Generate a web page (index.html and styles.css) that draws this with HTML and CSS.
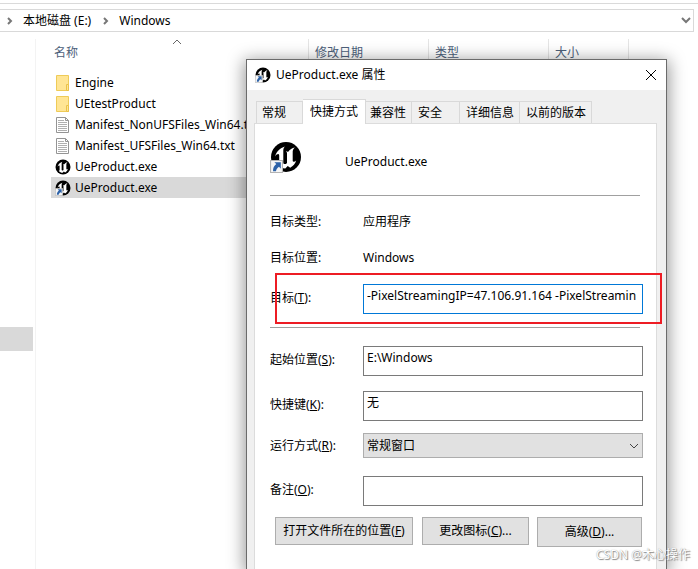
FILE: index.html
```html
<!DOCTYPE html>
<html lang="zh-CN">
  <head>
    <meta charset="UTF-8" />
    <meta name="viewport" content="width=device-width, initial-scale=1.0" />
    <title>Windows</title>
    <link rel="stylesheet" href="styles.css">
  </head>
  <body>
    <!-- shared icons -->
    <svg class="defs" aria-hidden="true">
      <symbol id="folder" viewBox="0 0 16 18">
        <path d="M1.500 1.500h12v15h-12z" fill="#ffe594" stroke="#eecb58" />
        <path d="M11.500 10.500h2v6h-2z" fill="#ffe594" stroke="#eac24a" />
      </symbol>
      <symbol id="file" viewBox="0 0 16 18">
        <path d="M1.500 1.500h9l3 3v12h-12z" fill="#fff" stroke="#949494" />
        <path d="M10.500 1.500v3h3" fill="none" stroke="#949494" />
        <path d="M3 4.500h6M3 6.500h9M3 8.500h9M3 10.500h9M3 12.500h9M3 14.500h9" stroke="#b0b0b0" />
      </symbol>
      <symbol id="unreal" viewBox="0 0 32 32">
        <circle cx="16" cy="16" r="15" fill="#000" />
        <path d="M15 5.500C10 7 6.500 10.500 5 15.500c1.500-2 2.800-2.700 3.600-2.300.6.300.6 1 .6 1.800v7c0 1.300-.7 1.600-1.700 1.400 2 2.700 4.700 4 7.800 4.100l2.400-2.400 2.500 1.700c3-1.700 5-4.300 6-7.300-1.200 1.200-2.200 1.600-3 1.100-.4-.2-.5-.6-.5-1.200V10.500c0-1.400 1-3 2.200-4-2.800.6-5 2-6.900 4.500-.6-.6-1.300-.8-2.200-.7.8.5 1.200 1.100 1.200 2v9.600c-.7.8-1.500 1.200-2.200 1.200-1 0-1.500-.6-1.500-1.600V9.500c0-1.700.6-3 1.700-4z" fill="#fff" />
      </symbol>
      <symbol id="arrow" viewBox="0 0 12 12">
        <path d="M.5.500h11v11H.500z" fill="#f7f7f7" stroke="#b4b4b4" />
        <path d="M4 2h6v6L8.300 6.300C6.500 7.500 6 8.500 5.500 10.300H2.800C2.700 7.500 3.700 5.500 5.800 3.800z" fill="#2d62a8" />
      </symbol>
      <symbol id="shortcut" viewBox="0 0 32 32">
        <use href="#unreal" width="32" height="32" />
        <use href="#arrow" y="19" width="13" height="13" />
      </symbol>
      <symbol id="shortcut-small" viewBox="0 0 16 16">
        <use href="#unreal" width="16" height="16" />
        <use href="#arrow" y="8" width="8" height="8" />
      </symbol>
    </svg>

    <div class="explorer">
      <div class="toolbar"></div>
      <nav class="address">
        <svg class="sep" viewBox="0 0 6 8"><path d="M1 1l3 3-3 3" /></svg>
        <a href="#">本地磁盘 (E:)</a>
        <svg class="sep" viewBox="0 0 6 8"><path d="M1 1l3 3-3 3" /></svg>
        <a href="#">Windows</a>
        <button class="history" aria-label="历史记录">
          <svg viewBox="0 0 10 7"><path d="M1 1l4 4 4-4" /></svg>
        </button>
      </nav>

      <div class="content">
        <aside class="sidebar"><div class="sidebar-item"></div></aside>
        <main class="files">
          <div class="columns">
            <div class="column column-name">
              名称
              <svg class="sort" viewBox="0 0 10 6"><path d="M1 5l4-4 4 4" /></svg>
            </div>
            <div class="column">修改日期</div>
            <div class="column">类型</div>
            <div class="column column-size">大小</div>
          </div>
          <ul class="list">
            <li><svg><use href="#folder" /></svg>Engine</li>
            <li><svg><use href="#folder" /></svg>UEtestProduct</li>
            <li><svg><use href="#file" /></svg>Manifest_NonUFSFiles_Win64.txt</li>
            <li><svg><use href="#file" /></svg>Manifest_UFSFiles_Win64.txt</li>
            <li><svg><use href="#unreal" /></svg>UeProduct.exe</li>
            <li class="selected"><svg><use href="#shortcut-small" /></svg>UeProduct.exe</li>
          </ul>
        </main>
      </div>
    </div>

    <section class="dialog">
      <header class="titlebar">
        <svg class="app-icon"><use href="#shortcut-small" /></svg>
        <h1>UeProduct.exe 属性</h1>
        <button class="close" aria-label="关闭">
          <svg viewBox="0 0 12 12"><path d="M1 1l10 10M11 1L1 11" /></svg>
        </button>
      </header>

      <div class="tabs">
        <button class="tab">常规</button>
        <button class="tab active">快捷方式</button>
        <button class="tab tab-tight">兼容性</button>
        <button class="tab tab-wide">安全</button>
        <button class="tab">详细信息</button>
        <button class="tab">以前的版本</button>
      </div>

      <form class="panel">
        <div class="summary">
          <svg class="big-icon"><use href="#shortcut" /></svg>
          <span>UeProduct.exe</span>
        </div>
        <hr />
        <div class="info">
          <span>目标类型:</span><span>应用程序</span>
          <span>目标位置:</span><span>Windows</span>
        </div>
        <div class="row target">
          <label for="target">目标(<u>T</u>):</label>
          <input type="text" id="target" class="focused" value="-PixelStreamingIP=47.106.91.164 -PixelStreamin" />
          <div class="highlight"></div>
        </div>
        <hr />
        <div class="row start">
          <label for="start">起始位置(<u>S</u>):</label>
          <input type="text" id="start" value="E:\Windows" />
        </div>
        <div class="row hotkey">
          <label for="hotkey">快捷键(<u>K</u>):</label>
          <input type="text" id="hotkey" value="无" />
        </div>
        <div class="row run">
          <label for="run">运行方式(<u>R</u>):</label>
          <div class="select">
            <select id="run"><option>常规窗口</option></select>
            <svg viewBox="0 0 10 6"><path d="M1 1l4 4 4-4" /></svg>
          </div>
        </div>
        <div class="row">
          <label for="comment">备注(<u>O</u>):</label>
          <input type="text" id="comment" />
        </div>
        <div class="buttons">
          <button type="button" class="btn-open">打开文件所在的位置(<u>F</u>)</button>
          <button type="button" class="btn-icon">更改图标(<u>C</u>)...</button>
          <button type="button" class="btn-more">高级(<u>D</u>)...</button>
        </div>
      </form>
    </section>

    <div class="watermark">CSDN @木心操作</div>
  </body>
</html>
```

FILE: styles.css
```css
* {
  box-sizing: border-box;
}
body {
  margin: 0;
  height: 100vh;
  position: relative;
  overflow: hidden;
  background: #fff;
  color: #000;
  font: 12px/18px "Noto Sans", "Noto Sans CJK SC", sans-serif;
}
button,
input,
select {
  font: inherit;
  color: inherit;
}
svg {
  display: block;
  flex: none;
}
.defs {
  position: absolute;
  width: 0;
  height: 0;
}

/* explorer window */
.explorer {
  height: 100%;
  display: flex;
  flex-direction: column;
}
.toolbar {
  height: 4px;
  border-bottom: 1px solid #dadada;
}
.address {
  display: flex;
  align-items: center;
  height: 23px;
  margin-top: 5px;
  margin-right: 4px;
  padding-left: 7px;
  border: 1px solid #d9d9d9;
  border-left: 0;
}
.address a {
  color: #000;
  text-decoration: none;
  margin: 0 12px 0 10px;
}
.sep {
  width: 6px;
  height: 8px;
  fill: none;
  stroke: #777;
  stroke-width: 2;
}
.history {
  margin-left: auto;
  padding: 0 2px;
  border: 0;
  background: none;
}
.history svg {
  width: 10px;
  height: 7px;
  fill: none;
  stroke: #777;
  stroke-width: 2;
}
.content {
  flex: 1;
  display: flex;
  padding-top: 7px;
}
.sidebar {
  width: 36px;
  border-right: 1px solid #f3f3f3;
  padding-top: 288px;
}
.sidebar-item {
  width: 33px;
  height: 24px;
  background: #d9d9d9;
}
.files {
  flex: 1;
}
.columns {
  display: flex;
  height: 26px;
}
.column {
  position: relative;
  width: 120px;
  padding: 5px 6px;
  border-right: 1px solid #e5e5e5;
  color: #4c607a;
}
.column-name {
  width: 273px;
  padding-left: 18px;
}
.column-size {
  width: 80px;
}
.sort {
  position: absolute;
  top: 0;
  left: 50%;
  width: 10px;
  height: 6px;
  fill: none;
  stroke: #666;
}
.list {
  list-style: none;
  margin: 7px 0 0 15px;
  padding: 0;
}
.list li {
  display: flex;
  align-items: center;
  gap: 4px;
  height: 21px;
  padding-left: 4px;
  white-space: nowrap;
}
.list svg {
  width: 16px;
  height: 18px;
}
.list .selected {
  width: 240px;
  background: #d9d9d9;
}

/* properties dialog */
.dialog {
  position: absolute;
  top: 59px;
  left: 246px;
  right: 31px;
  bottom: 0;
  display: flex;
  flex-direction: column;
  padding: 0 9px 0 7px;
  background: #f0f0f0;
  border: 1px solid #6b6b6b;
  border-bottom: 0;
  box-shadow: 0 3px 16px 2px rgba(0, 0, 0, 0.4);
}
.titlebar {
  display: flex;
  align-items: center;
  height: 30px;
  margin: 0 -9px 0 -7px;
  padding: 0 8px;
  background: #fff;
}
.titlebar h1 {
  margin: 0 auto 0 5px;
  font-size: 12px;
  font-weight: normal;
}
.app-icon {
  width: 16px;
  height: 16px;
}
.close {
  padding: 0 1px;
  border: 0;
  background: none;
}
.close svg {
  width: 12px;
  height: 12px;
  fill: none;
  stroke: #000;
}
.tabs {
  display: flex;
  align-items: flex-end;
  height: 33px;
  padding-left: 2px;
}
.tab {
  height: 22px;
  padding: 0 16px 0 5px;
  border: 1px solid #d9d9d9;
  border-bottom: 0;
  background: #f0f0f0;
  white-space: nowrap;
}
.tab + .tab {
  border-left: 0;
  padding: 0 5px 0 6px;
}
.tab.active {
  position: relative;
  height: 25px;
  margin-bottom: -1px;
  padding: 0 7px;
  background: #fff;
}
.tab.tab-tight {
  padding: 0 5px 0 4px;
}
.tab.tab-wide {
  padding: 0 17px 0 6px;
}
.panel {
  flex: 1;
  margin: 0;
  padding: 0 13px 0 15px;
  background: #fff;
  border: 1px solid #dcdcdc;
  border-bottom: 0;
}
.summary {
  display: flex;
  align-items: flex-start;
  height: 71px;
  padding-top: 17px;
  gap: 43px;
}
.summary span {
  padding-top: 12px;
}
.big-icon {
  width: 32px;
  height: 32px;
}
hr {
  height: 1px;
  margin: 0 3px 0 0;
  border: 0;
  background: #a0a0a0;
}
.info {
  display: grid;
  grid-template-columns: 93px 1fr;
  grid-auto-rows: 36px;
  align-items: center;
  padding: 8px 0;
}
.row {
  display: grid;
  grid-template-columns: 93px 1fr;
  align-items: center;
  margin-bottom: 15px;
}
.row label {
  padding-bottom: 3px;
}
.row.target {
  position: relative;
  margin-bottom: 13px;
}
.row.start {
  margin-top: 18px;
}
.row.hotkey {
  margin-bottom: 12px;
}
.row.run {
  margin-bottom: 18px;
}
.row.run label {
  padding-bottom: 0;
}
.row input {
  width: 100%;
  min-width: 0;
  height: 30px;
  padding: 0 2px 8px 3px;
  background: #fff;
  border: 1px solid #7a7a7a;
  border-radius: 0;
  outline: 0;
}
.row input.focused {
  border-color: #0078d7;
}
.highlight {
  position: absolute;
  top: -11px;
  bottom: -10px;
  left: 5px;
  right: -19px;
  border: 2px solid #ed1c24;
  pointer-events: none;
}
.select {
  position: relative;
}
.select select {
  display: block;
  width: 100%;
  height: 25px;
  padding: 0 3px;
  appearance: none;
  background: #e1e1e1;
  border: 1px solid #adadad;
  border-radius: 0;
}
.select svg {
  position: absolute;
  top: 10px;
  right: 4px;
  width: 10px;
  height: 6px;
  fill: none;
  stroke: #444;
}
.buttons {
  display: flex;
  align-items: flex-start;
  margin: -4px 1px 0 5px;
}
.buttons button {
  height: 28px;
  padding: 0;
  background: #e1e1e1;
  border: 1px solid #adadad;
  white-space: nowrap;
}
.buttons .btn-open {
  width: 138px;
  margin-right: 9px;
}
.buttons .btn-icon {
  width: 107px;
  margin-right: 8px;
}
.buttons .btn-more {
  width: 105px;
  height: 30px;
}

.watermark {
  position: absolute;
  right: 8px;
  bottom: 5px;
  color: #fff;
  font-size: 12px;
  text-shadow: 1px 1px 1px #888, 0 0 1px #999;
}
```
